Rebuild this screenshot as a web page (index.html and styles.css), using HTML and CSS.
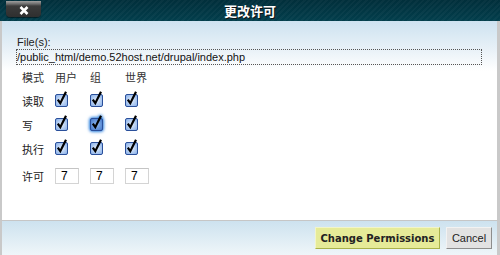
FILE: index.html
```html
<!DOCTYPE html>
<html lang="zh">
<head>
    <meta charset="UTF-8">
    <title>更改许可</title>
    <link rel="stylesheet" href="styles.css">
</head>
<body>

    <div class="dialog">
        <div class="titlebar">
            <button class="close-btn">
                <svg width="10" height="9" viewBox="0 0 10 9"><path d="M1.5 1 L8.5 8 M8.5 1 L1.5 8" stroke="#fff" stroke-width="2.6"/></svg>
            </button>
            <h1>更改许可</h1>
        </div>

        <div class="main">
            <div class="file-label">File(s):</div>
            <div class="file-box">/public_html/demo.52host.net/drupal/index.php</div>

            <div class="perm-grid">
                <div class="cell head">模式</div>
                <div class="cell head">用户</div>
                <div class="cell head">组</div>
                <div class="cell head">世界</div>

                <div class="cell">读取</div>
                <div class="cell"><span class="cb"></span></div>
                <div class="cell"><span class="cb"></span></div>
                <div class="cell"><span class="cb"></span></div>

                <div class="cell">写</div>
                <div class="cell"><span class="cb"></span></div>
                <div class="cell"><span class="cb focus"></span></div>
                <div class="cell"><span class="cb"></span></div>

                <div class="cell">执行</div>
                <div class="cell"><span class="cb"></span></div>
                <div class="cell"><span class="cb"></span></div>
                <div class="cell"><span class="cb"></span></div>

                <div class="cell tall">许可</div>
                <div class="cell tall"><input type="text" class="perm-input" value="7"></div>
                <div class="cell tall"><input type="text" class="perm-input" value="7"></div>
                <div class="cell tall"><input type="text" class="perm-input" value="7"></div>
            </div>
        </div>

        <div class="footer">
            <button class="btn-change">Change Permissions</button>
            <button class="btn-cancel">Cancel</button>
        </div>
    </div>

    <script>
        // draw the checkbox glyphs
        function checkSvg(focused) {
            const a = focused ? '#3f74c8' : '#7fa9e6';
            const b = focused ? '#8fb7ee' : '#e6f0fc';
            return '<svg width="14" height="16" viewBox="0 0 14 16">' +
                '<defs><radialGradient id="g' + (focused ? 'f' : 'n') + '" cx="0.5" cy="0.5" r="0.7">' +
                '<stop offset="0" stop-color="' + b + '"/><stop offset="1" stop-color="' + a + '"/>' +
                '</radialGradient></defs>' +
                '<rect x="0.5" y="3.5" width="12" height="12" rx="1.5" fill="url(#g' + (focused ? 'f' : 'n') + ')" stroke="#2a4f9a"/>' +
                '<path d="M2.8 8.6 L5.3 12.2 L11 0.8" fill="none" stroke="#000" stroke-width="2.2"/>' +
                '</svg>';
        }
        document.querySelectorAll('.cb').forEach(cb => cb.innerHTML = checkSvg(cb.classList.contains('focus')));
    </script>

</body>
</html>
```

FILE: styles.css
```css
body {
    margin: 0;
    width: 500px;
    height: 255px;
    overflow: hidden;
    font-family: 'Liberation Sans', Arial, sans-serif;
    background: #fff;
}

.dialog {
    width: 500px;
    height: 255px;
    display: flex;
    flex-direction: column;
}

.titlebar {
    height: 21px;
    flex-shrink: 0;
    display: flex;
    align-items: center;
    justify-content: center;
    position: relative;
    background:
        repeating-linear-gradient(-45deg, rgba(255,255,255,0.03) 0 2px, rgba(0,0,0,0) 2px 4px),
        linear-gradient(#012f3b, #023e4c);
}

.titlebar h1 {
    margin: 0;
    font-family: 'Noto Sans CJK SC', sans-serif;
    font-size: 13px;
    font-weight: bold;
    color: #fff;
    line-height: 21px;
    text-shadow: 1px 1px 0 #111;
}

/* close button sits over the bar's left end */
.close-btn {
    position: absolute;
    left: 6px;
    top: 1px;
    width: 35px;
    height: 16px;
    padding: 0;
    border: none;
    border-radius: 0 0 4px 4px;
    background: linear-gradient(#a0a0a0 0, #6b6b6b 3px, #3b3b3b 5px, #2f2f2f 100%);
    box-shadow: 0 1px 1px rgba(0,0,0,0.5);
    display: flex;
    align-items: center;
    justify-content: center;
}

.close-btn svg {
    margin-top: 2px;
}

.main {
    flex: 1;
    border-left: 2px solid #c9c9c9;
    border-right: 3px solid #c9c9c9;
    background: linear-gradient(#cde2f0 0, #eaf2f8 30px, #ffffff 50px);
    padding: 15px 0 0 14px;
}

.file-label {
    font-size: 11px;
    line-height: 13px;
    color: #222;
    padding-left: 1px;
}

.file-box {
    width: 464px;
    border: 1px dotted #555;
    font-size: 11px;
    line-height: 14px;
    color: #111;
}

.perm-grid {
    margin-left: 6px;
    display: grid;
    grid-template-columns: 33px 35px 35px 40px;
    grid-template-rows: 24px 24px 24px 24px 30px;
}

.cell {
    display: flex;
    align-items: center;
    font-family: 'Noto Sans CJK SC', sans-serif;
    font-size: 11px;
    color: #222;
}

.cell.head {
    color: #333;
}

.cb {
    display: block;
    width: 14px;
    height: 16px;
    margin-bottom: 4px;
}

.cb svg {
    display: block;
}

.cb.focus {
    filter: drop-shadow(0 0 1.5px #3c8ae0) drop-shadow(0 0 1.5px #3c8ae0);
}

.perm-input {
    width: 24px;
    height: 16px;
    box-sizing: border-box;
    border: 1px solid #d4d4d4;
    border-top-color: #c4c4c4;
    padding: 0 0 0 5px;
    font-family: 'Liberation Sans', Arial, sans-serif;
    font-size: 12px;
    color: #000;
    outline: none;
}

.footer {
    height: 35px;
    flex-shrink: 0;
    box-sizing: border-box;
    border-top: 1px solid #c6c6c6;
    border-left: 2px solid #c9c9c9;
    border-right: 3px solid #c9c9c9;
    background: linear-gradient(#cde2ef, #eff6f9);
    display: flex;
    justify-content: flex-end;
    align-items: flex-start;
    gap: 6px;
    padding: 6px 5px 0 0;
}

.btn-change {
    width: 125px;
    height: 22px;
    padding: 0;
    border: 1px solid;
    border-color: #f2f5c8 #a9b24a #a9b24a #f2f5c8;
    background: #e6eb98;
    font-family: 'DejaVu Sans', Verdana, sans-serif;
    font-size: 10px;
    font-weight: bold;
    color: #222;
}

.btn-cancel {
    width: 46px;
    height: 22px;
    padding: 0;
    border: 1px solid;
    border-color: #f2f2f2 #8d8d8d #8d8d8d #f2f2f2;
    background: #e2e2e2;
    font-family: 'Liberation Sans', Arial, sans-serif;
    font-size: 11px;
    color: #222;
}
```
